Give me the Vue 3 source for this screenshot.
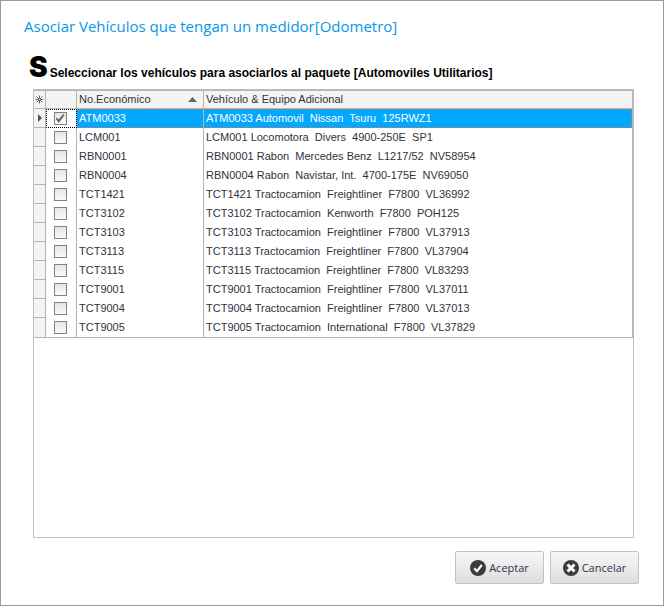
<template>
  <form class="dialog" @submit.prevent>
    <h1 class="dialog-title">Asociar Vehículos que tengan un medidor[Odometro]</h1>

    <h2 class="subtitle">
      <span class="initial">S</span>
      <span>Seleccionar los vehículos para asociarlos al paquete [Automoviles Utilitarios]</span>
    </h2>

    <div class="grid">
      <table class="vehicles">
        <colgroup>
          <col class="indicator-col" />
          <col class="check-col" />
          <col class="number-col" />
          <col />
        </colgroup>
        <thead>
          <tr>
            <th class="indicator">
              <svg class="star" viewBox="0 0 9 9" width="9" height="9">
                <path d="M4.5 0.5v8M0.5 4.5h8M1.5 1.5l6 6M7.5 1.5l-6 6" stroke="#666" fill="none" />
                <rect x="4" y="4" width="1" height="1" fill="#f4f4f4" />
              </svg>
            </th>
            <th></th>
            <th>
              <div class="sorted">
                <span>No.Económico</span>
                <svg viewBox="0 0 9 5" width="9" height="5">
                  <path d="M0 5L4.5 0L9 5z" fill="#666" />
                </svg>
              </div>
            </th>
            <th>Vehículo &amp; Equipo Adicional</th>
          </tr>
        </thead>
        <tbody>
          <tr
            v-for="vehicle in vehicles"
            :key="vehicle.id"
            :class="{ selected: vehicle.id === current }"
            @click="current = vehicle.id"
          >
            <td class="indicator">
              <svg v-if="vehicle.id === current" class="arrow" viewBox="0 0 4 8" width="4" height="8">
                <path d="M0 0L4 4L0 8z" fill="#555" />
              </svg>
            </td>
            <td class="check-cell">
              <input v-model="vehicle.checked" type="checkbox" :aria-label="vehicle.id" />
            </td>
            <td class="number-cell">{{ vehicle.id }}</td>
            <td class="name-cell">{{ vehicle.id + ' ' + vehicle.name }}</td>
          </tr>
        </tbody>
      </table>
    </div>

    <div class="actions">
      <button type="submit" class="btn">
        <svg viewBox="0 0 16 16" width="16" height="16">
          <circle cx="8" cy="8" r="8" fill="#3c3c3c" />
          <path d="M4.2 8.4L7 11.2L11.8 5" stroke="#fff" stroke-width="2.2" fill="none" />
        </svg>
        <span>Aceptar</span>
      </button>
      <button type="button" class="btn">
        <svg viewBox="0 0 16 16" width="16" height="16">
          <circle cx="8" cy="8" r="8" fill="#3c3c3c" />
          <path d="M4.5 4.5L11.5 11.5M11.5 4.5L4.5 11.5" stroke="#fff" stroke-width="3" fill="none" />
        </svg>
        <span>Cancelar</span>
      </button>
    </div>
  </form>
</template>

<script setup>
import { ref } from 'vue'

const current = ref('ATM0033')

const vehicles = ref([
  { id: 'ATM0033', name: 'Automovil  Nissan  Tsuru  125RWZ1', checked: true },
  { id: 'LCM001', name: 'Locomotora  Divers  4900-250E  SP1', checked: false },
  { id: 'RBN0001', name: 'Rabon  Mercedes Benz  L1217/52  NV58954', checked: false },
  { id: 'RBN0004', name: 'Rabon  Navistar, Int.  4700-175E  NV69050', checked: false },
  { id: 'TCT1421', name: 'Tractocamion  Freightliner  F7800  VL36992', checked: false },
  { id: 'TCT3102', name: 'Tractocamion  Kenworth  F7800  POH125', checked: false },
  { id: 'TCT3103', name: 'Tractocamion  Freightliner  F7800  VL37913', checked: false },
  { id: 'TCT3113', name: 'Tractocamion  Freightliner  F7800  VL37904', checked: false },
  { id: 'TCT3115', name: 'Tractocamion  Freightliner  F7800  VL83293', checked: false },
  { id: 'TCT9001', name: 'Tractocamion  Freightliner  F7800  VL37011', checked: false },
  { id: 'TCT9004', name: 'Tractocamion  Freightliner  F7800  VL37013', checked: false },
  { id: 'TCT9005', name: 'Tractocamion  International  F7800  VL37829', checked: false }
])
</script>

<style>
body {
  margin: 0;
  background: #fff;
}
</style>

<style scoped>
.dialog {
  box-sizing: border-box;
  display: flex;
  flex-direction: column;
  min-height: 100vh;
  padding: 13px 24px 21px 23px;
  border: 1px solid #999;
  background: #fff;
  font-family: 'Liberation Sans', Arial, sans-serif;
  color: #32323c;
}

.dialog-title {
  margin: 0;
  font-family: 'Open Sans', 'Noto Sans', sans-serif;
  font-size: 15px;
  font-weight: 400;
  line-height: 24px;
  color: #0a96e6;
}

.subtitle {
  display: flex;
  align-items: baseline;
  gap: 2px;
  margin: 14px 0 0 5px;
  font-size: 12px;
  line-height: 32px;
  font-weight: 700;
  color: #000;
}

.initial {
  font-family: Inter, sans-serif;
  font-size: 28px;
  font-weight: 900;
  line-height: 30px;
}

.grid {
  flex: 1;
  margin: 0 5px 0 9px;
  border: 1px solid #bebebe;
}

.vehicles {
  width: 100%;
  table-layout: fixed;
  border-collapse: separate;
  border-spacing: 0;
  border: 1px solid #b4b4b4;
  border-left: 0;
  box-sizing: border-box;
  font-size: 11px;
}

.indicator-col {
  width: 12px;
}

.check-col {
  width: 31px;
}

.number-col {
  width: 127px;
}

.vehicles th,
.vehicles td {
  box-sizing: border-box;
  height: 19px;
  padding: 0 2px;
  border-right: 1px solid #b4b4b4;
  line-height: 17px;
  text-align: left;
  white-space: pre;
}

.vehicles th {
  height: 18px;
  border-bottom: 1px solid #b4b4b4;
  background: #f4f4f4;
  font-weight: 400;
}

.vehicles th:last-child,
.vehicles td:last-child {
  border-right: 0;
}

.vehicles .indicator {
  padding: 0;
  border-bottom: 1px solid #b4b4b4;
  background: #f4f4f4;
}

.vehicles tbody tr:last-child .indicator {
  border-bottom: 0;
}

.indicator svg {
  display: block;
  margin: 0 auto;
}

.sorted {
  display: flex;
  align-items: center;
  justify-content: space-between;
  padding-right: 4px;
}

.vehicles .check-cell {
  padding: 0 2px 0 0;
}

.check-cell input {
  appearance: none;
  display: block;
  box-sizing: border-box;
  width: 13px;
  height: 13px;
  margin: 0 auto;
  border: 1px solid #828282;
  background: linear-gradient(#e6e6e6, #fafafa);
}

.check-cell input:checked::after {
  content: '';
  display: block;
  width: 9px;
  height: 9px;
  margin: 1px;
  background: #666;
  clip-path: polygon(0 50%, 14% 38%, 34% 62%, 88% 0, 100% 14%, 36% 100%);
}

.selected .check-cell {
  outline: 1px dotted #000;
  outline-offset: -1px;
}

.selected .number-cell,
.selected .name-cell {
  border-top: 1px dotted #e8743c;
  border-bottom: 1px dotted #e8743c;
  background: #00a8ff;
  color: #fff;
}

.vehicles .selected .name-cell {
  border-right: 1px dotted #e8743c;
}

.actions {
  display: flex;
  justify-content: flex-end;
  gap: 6px;
  margin-top: 13px;
}

.btn {
  display: flex;
  align-items: center;
  justify-content: center;
  gap: 3px;
  width: 89px;
  height: 33px;
  padding: 0;
  border: 1px solid #c3c3c3;
  border-radius: 2px;
  background: linear-gradient(#f7f7f7, #dedede);
  font-family: 'Open Sans', 'Noto Sans', sans-serif;
  font-size: 11px;
  color: #32324b;
}
</style>
